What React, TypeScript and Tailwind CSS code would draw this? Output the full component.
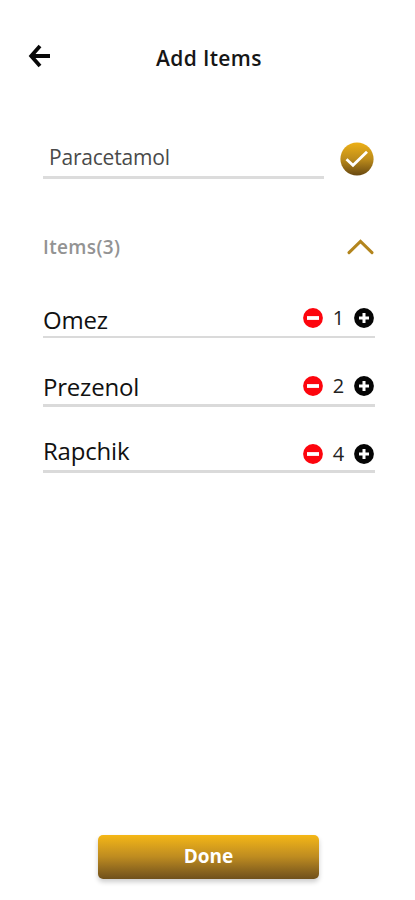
import React from "react";

type Item = { name: string; count: number; row: string; label: string; controls: string };

const items: Item[] = [
  { name: "Omez", count: 1, row: "h-[59px] border-b-2", label: "mb-0", controls: "mb-[8px]" },
  { name: "Prezenol", count: 2, row: "h-[69px] border-b-[3px]", label: "mb-[1px]", controls: "mb-[8px]" },
  { name: "Rapchik", count: 4, row: "h-[66px] border-b-[3px]", label: "mb-[3px]", controls: "mb-[6px]" },
];

function RoundIcon({ plus }: { plus?: boolean }) {
  return (
    <svg className="block size-5" viewBox="0 0 20 20">
      <circle cx="10" cy="10" r="9.9" fill={plus ? "#050505" : "#fd050d"} />
      <path d={plus ? "M5 10H15M10 5V15" : "M4 10H16"} stroke="#fff" strokeWidth={plus ? 3 : 3.8} />
    </svg>
  );
}

export default function App() {
  return (
    <main className="flex h-[900px] w-[415px] flex-col bg-white font-['Open_Sans','Noto_Sans',sans-serif] text-black">
      <header className="flex h-[88px] shrink-0 items-start pl-[28px] pt-[44px]">
        <button aria-label="Back">
          <svg className="block h-6 w-[23px]" viewBox="0 0 23 24" fill="none" stroke="#080808" strokeWidth="3.8">
            <path d="M12 2L3.2 12L12 22M3.5 12H22" />
          </svg>
        </button>
        <h1 className="ml-[105px] whitespace-nowrap text-[21px] font-semibold leading-7 tracking-[0.35px] text-[#161616]">Add Items</h1>
      </header>

      <div className="flex h-[91px] shrink-0 items-end pl-[43px]">
        <div className="flex h-[43px] w-[281px] items-start border-b-[3px] border-[#dcdcdc] pl-[6px] pt-[7px]">
          <span className="text-[21px] leading-7 tracking-[-0.2px] text-[#4a4a4a]">Paracetamol</span>
        </div>
        <svg className="mb-[3px] ml-[16px] block size-[34px]" viewBox="0 0 34 34">
          <defs>
            <linearGradient id="gold" x1="0" y1="0" x2="0" y2="1">
              <stop stopColor="#edb016" />
              <stop offset=".5" stopColor="#bd8c1b" />
              <stop offset="1" stopColor="#684811" />
            </linearGradient>
          </defs>
          <circle cx="17" cy="17" r="16.6" fill="url(#gold)" />
          <path d="M6.5 17.3L13 23.3L27 9.8" fill="none" stroke="#fff" strokeWidth="2.8" />
        </svg>
      </div>

      <section className="ml-[43px] w-[332px]">
        <div className="flex h-[100px] items-start justify-between pt-[54px]">
          <h2 className="text-[19px] font-semibold leading-7 tracking-[0.35px] text-[#939393]">Items(3)</h2>
          <svg className="mt-[6px] block h-4 w-[28px]" viewBox="0 0 28 16" fill="none" stroke="#b3851d" strokeWidth="3" strokeLinecap="round">
            <path d="M2 13.6L13.5 2.4L25 13.6" />
          </svg>
        </div>
        {items.map((item) => (
          <div key={item.name} className={`flex items-end justify-between border-[#dadada] ${item.row}`}>
            <span className={`text-[24px] leading-8 tracking-[-0.2px] text-[#111] ${item.label}`}>{item.name}</span>
            <div className={`-ml-px mr-px flex h-5 items-center ${item.controls}`}>
              <button aria-label={`Remove ${item.name}`}><RoundIcon /></button>
              <span className="-mt-px w-[31px] text-center text-[20px] leading-5 text-[#222]">{item.count}</span>
              <button aria-label={`Add ${item.name}`}><RoundIcon plus /></button>
            </div>
          </div>
        ))}
      </section>

      <button className="mb-[21px] ml-[98px] mt-auto h-[44px] w-[221px] rounded-[5px] bg-linear-to-b from-[#f5b715] via-[#bd8b20] to-[#70501b] pb-[2px] text-[19px] font-bold leading-7 text-white shadow-[0_3px_5px_rgba(0,0,0,0.2)]">Done</button>
    </main>
  );
}
